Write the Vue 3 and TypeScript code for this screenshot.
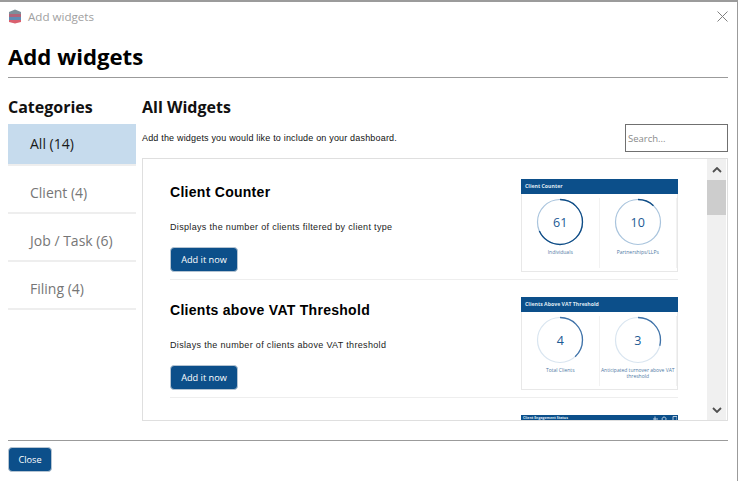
<script setup lang="ts">
interface Gauge { value: string; label: string; pct: number; dark: boolean }
interface Widget { title: string; desc: string; thumb: string; gauges: Gauge[] }
const cats = [
  { name: 'All (14)', active: true },
  { name: 'Client (4)', active: false },
  { name: 'Job / Task (6)', active: false },
  { name: 'Filing (4)', active: false },
]
const widgets: Widget[] = [
  { title: 'Client Counter', desc: 'Displays the number of clients filtered by client type', thumb: 'Client Counter',
    gauges: [ { value: '61', label: 'Individuals', pct: 68, dark: true }, { value: '10', label: 'Partnerships/LLPs', pct: 12, dark: true } ] },
  { title: 'Clients above VAT Threshold', desc: 'Dislays the number of clients above VAT threshold', thumb: 'Clients Above VAT Threshold',
    gauges: [ { value: '4', label: 'Total Clients', pct: 38, dark: false }, { value: '3', label: 'Anticipated turnover above VAT threshold', pct: 29, dark: false } ] },
]
const C = 2 * Math.PI * 22.5
const dash = (p: number) => `${(C * p) / 100} ${C}`
</script>

<template>
  <div class="win">
    <div class="titlebar">
      <svg class="logo" viewBox="0 0 14 15" width="14" height="15">
        <path d="M1 3 L7 0.5 L13 3 L13 5 L1 5 Z" fill="#7d8f9a" />
        <rect x="1" y="5" width="12" height="3" fill="#b0647a" />
        <rect x="1" y="8" width="12" height="3" fill="#5f8db5" />
        <path d="M1 11 H13 V13 L7 14.5 L1 13 Z" fill="#d9606f" />
      </svg>
      <span class="titletext">Add widgets</span>
      <svg class="x" viewBox="0 0 11 11" width="11" height="11"><path d="M0.5 0.5 L10.5 10.5 M10.5 0.5 L0.5 10.5" stroke="#808080" stroke-width="1" fill="none" /></svg>
    </div>
    <h1>Add widgets</h1>
    <div class="body">
      <aside>
        <h2>Categories</h2>
        <div v-for="c in cats" :key="c.name" class="cat" :class="{ active: c.active }">{{ c.name }}</div>
      </aside>
      <main>
        <h2>All Widgets</h2>
        <div class="intro">
          <span class="introtext">Add the widgets you would like to include on your dashboard.</span>
          <input class="search" placeholder="Search..." />
        </div>
        <div class="list">
          <div class="scrollarea">
            <div v-for="w in widgets" :key="w.title" class="item">
              <div class="info">
                <div class="wtitle">{{ w.title }}</div>
                <div class="wdesc">{{ w.desc }}</div>
                <button class="btn">Add it now</button>
              </div>
              <div class="thumb">
                <div class="thead">{{ w.thumb }}</div>
                <div class="tbody">
                  <div v-for="g in w.gauges" :key="g.label" class="cell">
                    <div class="gauge">
                      <svg viewBox="0 0 48 48" width="48" height="48">
                        <circle cx="24" cy="24" r="22.5" fill="none" :stroke="g.dark ? '#a9c4dd' : '#d9e5f0'" stroke-width="1.2" />
                        <circle cx="24" cy="24" r="22.5" fill="none" :stroke="g.dark ? '#0f4c85' : '#3f72a8'" stroke-width="1.3" :stroke-dasharray="dash(g.pct)" transform="rotate(-90 24 24)" />
                      </svg>
                      <span class="gval">{{ g.value }}</span>
                    </div>
                    <div class="glabel">{{ g.label }}</div>
                  </div>
                </div>
              </div>
            </div>
            <div class="item last">
              <div class="info"></div>
              <div class="thumb">
                <div class="thead small">
                  <span>Client Engagement Status</span>
                  <svg viewBox="0 0 24 6" width="24" height="6"><path d="M2 0.5V5.5M0 3H5M11 1a2 2 0 1 0 .1 0M20 .5h4v5h-4z" stroke="#dce6f0" stroke-width=".8" fill="none" /></svg>
                </div>
              </div>
            </div>
          </div>
          <div class="scrollbar">
            <div class="arrow"><svg viewBox="0 0 10 6" width="10" height="6"><path d="M1 5 L5 1 L9 5" stroke="#505050" stroke-width="1.8" fill="none" /></svg></div>
            <div class="track"><div class="knob"></div></div>
            <div class="arrow"><svg viewBox="0 0 10 6" width="10" height="6"><path d="M1 1 L5 5 L9 1" stroke="#505050" stroke-width="1.8" fill="none" /></svg></div>
          </div>
        </div>
      </main>
    </div>
    <footer><button class="btn close">Close</button></footer>
  </div>
</template>

<style>
html, body { margin: 0; background: #fff; }
</style>

<style scoped>
.win {
  width: 738px; height: 481px; box-sizing: border-box;
  border-top: 2px solid #9b9b9b; border-right: 1px solid #9b9b9b;
  padding: 0 9px 0 8px; overflow: hidden; background: #fff;
  font-family: "Open Sans", sans-serif; display: flex; flex-direction: column;
}
.titlebar { height: 28px; display: flex; align-items: center; flex: none; }
.logo { margin-right: 6px; }
.titletext { font-size: 11.6px; color: #a0a0a0; flex: 1; }
h1 {
  margin: 0; font-size: 22.2px; line-height: 30px; box-sizing: border-box; font-weight: 700; color: #000;
  padding-top: 12px; height: 48px; border-bottom: 1px solid #9b9b9b; flex: none;
}
.body { display: flex; gap: 6px; height: 0; flex: 1; padding-top: 18px; }
aside { width: 128px; flex: none; }
h2 { margin: 0; font-size: 16px; line-height: 22px; font-weight: 700; color: #111; }
aside h2 { margin-bottom: 6px; }
.cat {
  height: 38px; padding-top: 8px; border-bottom: 2px solid #eeeeee; padding-left: 22px;
  font-size: 14px; line-height: 38px; color: #767676;
}
.cat.active { height: 40px; line-height: 40px; background: #c6dbed; color: #1a1a1a; padding-top: 0; }
main { flex: 1; min-width: 0; display: flex; flex-direction: column; }
.intro { height: 28px; display: flex; justify-content: space-between; align-items: center; margin-top: 6px; }
.introtext { font-family: "Liberation Sans", sans-serif; font-size: 9px; letter-spacing: 0.18px; color: #111; }
.search {
  width: 103px; height: 28px; box-sizing: border-box; border: 1px solid #707070; padding: 0 2px; margin: 0; outline: none;
  font-family: "Open Sans", sans-serif; font-size: 9.5px; background: #fff; border-radius: 0;
}
.search::placeholder { color: #8a8a8a; opacity: 1; }
.list {
  margin-top: 6px; height: 263px; box-sizing: border-box; border: 1px solid #dfdfdf; display: flex; flex: none;
}
.scrollarea { flex: 1; overflow: hidden; padding: 3px 28px 0 27px; min-width: 0; }
.item {
  width: 508px; height: 118px; box-sizing: border-box; padding-top: 17px; border-bottom: 1px solid #eeeeee;
  display: flex; justify-content: space-between;
}
.item.last { border-bottom: 0; }
.info { font-family: "Liberation Sans", sans-serif; }
.wtitle { font-size: 14px; font-weight: 700; letter-spacing: 0.28px; line-height: 26px; color: #000; }
.wdesc { font-size: 9px; letter-spacing: 0.33px; line-height: 12px; color: #222; margin-top: 16px; }
.btn {
  display: block; margin: 14px 0 0; width: 68px; height: 25px; background: #0c4f8a; border: 1px solid #b5c4d2; border-radius: 4px; color: #fff;
  font-family: "Open Sans", sans-serif; font-size: 9.2px; padding: 0; box-sizing: border-box;
}
.thumb { width: 157px; height: 93px; box-sizing: border-box; border: 1px solid #e8e8e8; border-top: 0; flex: none; }
.thead {
  height: 15px; background: #0c4f8a; color: #dfe9f3; font-size: 5.2px; font-weight: 700; line-height: 15px; padding: 0 4px; margin: 0 -1px;
  display: flex; justify-content: space-between; align-items: center;
}
.thead.small { font-size: 3.5px; line-height: 4px; align-items: flex-start; padding: 1px 1px 0 2px; box-sizing: border-box; }
.tbody { display: flex; padding-top: 4px; }
.cell { flex: none; width: 77.5px; box-sizing: border-box; display: flex; flex-direction: column; align-items: center; height: 70px; border-right: 1px solid #f2f2f2; padding: 0 1px; }
.gauge { position: relative; width: 48px; height: 48px; }
.gauge svg { display: block; }
.gval {
  position: absolute; inset: 0; display: flex; align-items: center; justify-content: center;
  font-family: "Open Sans", sans-serif; font-size: 12.5px; color: #1d5a94;
}
.glabel { font-size: 5px; line-height: 6px; color: #4f7aa5; text-align: center; margin-top: 3px; }
.scrollbar { width: 19px; flex: none; background: #f0f0f0; margin-right: 1px; display: flex; flex-direction: column; }
.arrow { height: 21px; display: flex; align-items: center; justify-content: center; flex: none; }
.track { flex: 1; }
.knob { height: 35px; background: #cdcdcd; }
footer { height: 41px; flex: none; margin-top: 19px; border-top: 1px solid #9b9b9b; padding-top: 6px; box-sizing: border-box; }
.btn.close { margin: 0; width: 44px; }
</style>
